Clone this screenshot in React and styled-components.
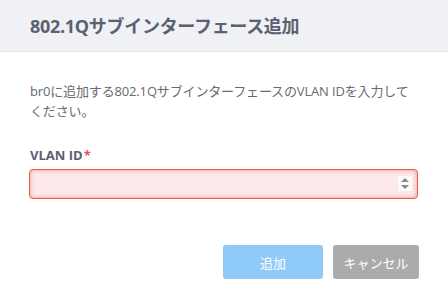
import React, { useState } from 'react'
import styled, { createGlobalStyle } from 'styled-components'

const GlobalStyle = createGlobalStyle`
    html, body {
        margin: 0;
        padding: 0;
        background: #ffffff;
        font-family: "Open Sans", "Noto Sans CJK JP", sans-serif;
    }
`

const App = () => {

    const [vlanId, setVlanId] = useState('')

    return <Dialog>
        <GlobalStyle />
        <Header>
            <Title>802.1Qサブインターフェース追加</Title>
        </Header>
        <Body>
            <Message>br0に追加する802.1QサブインターフェースのVLAN IDを入力してください。</Message>
            <Label>VLAN ID<Required>*</Required></Label>
            <Field>
                <Input value={vlanId} onChange={(e)=>setVlanId(e.target.value)} />
                <Spinner>
                    <svg width="10" height="13" viewBox="0 0 10 13">
                        <path d="M5 1 L9 5 L1 5 Z" fill="#8a8a8a" />
                        <path d="M1 8 L9 8 L5 12 Z" fill="#8a8a8a" />
                    </svg>
                </Spinner>
            </Field>
        </Body>
        <Footer>
            <Button kind='primary'>追加</Button>
            <Button kind='cancel' wide>キャンセル</Button>
        </Footer>
    </Dialog>
}

export default App

const Dialog = styled.div`
    width: 448px;
    height: 298px;
    display: flex;
    flex-direction: column;
    background: #ffffff;
`

const Header = styled.div`
    height: 52px;
    box-sizing: border-box;
    display: flex;
    align-items: center;
    padding: 0 30px 2px;
    background: #f0f1f5;
    border-bottom: 1px solid #e1e2e7;
`

const Title = styled.h1`
    margin: 0;
    font-size: 18px;
    font-weight: 700;
    color: #5b6072;
    letter-spacing: -0.3px;
`

const Body = styled.div`
    padding: 29px 30px 0 29px;
    display: flex;
    flex-direction: column;
`

const Message = styled.p`
    margin: 0 0 0 1px;
    font-size: 13px;
    line-height: 20px;
    color: #666a72;
    width: 388px;
    letter-spacing: -0.15px;
`

const Label = styled.div`
    margin: 26px 0 6px 1px;
    font-size: 13px;
    font-weight: 700;
    line-height: 16px;
    color: #5b6072;
`

const Required = styled.span`
    color: #e8506a;
    margin-left: 1px;
`

const Field = styled.div`
    position: relative;
    width: 389px;
    height: 30px;
`

const Input = styled.input`
    box-sizing: border-box;
    width: 100%;
    height: 100%;
    border: 1px solid #e8594a;
    border-radius: 4px;
    background: #fde8ea;
    box-shadow: inset 0 0 4px rgba(232, 89, 74, 0.6);
    outline: none;
    padding: 0 8px;
    font-size: 13px;
    font-family: "Open Sans", "Noto Sans CJK JP", sans-serif;
`

const Spinner = styled.div`
    position: absolute;
    top: 7px;
    right: 6px;
    width: 14px;
    height: 15px;
    background: #fbfbfb;
    display: flex;
    align-items: center;
    justify-content: center;
`

const Footer = styled.div`
    margin-top: auto;
    padding: 0 29px 19px 0;
    display: flex;
    justify-content: flex-end;
    gap: 10px;
`

const Button = styled.button`
    width: ${p => p.wide ? '86px' : '100px'};
    height: 34px;
    border: none;
    border-radius: 3px;
    color: #ffffff;
    font-size: 13px;
    font-family: "Open Sans", "Noto Sans CJK JP", sans-serif;
    background: ${p => p.kind === 'primary' ? '#90caf8' : '#ababab'};
    padding: 0;
`
